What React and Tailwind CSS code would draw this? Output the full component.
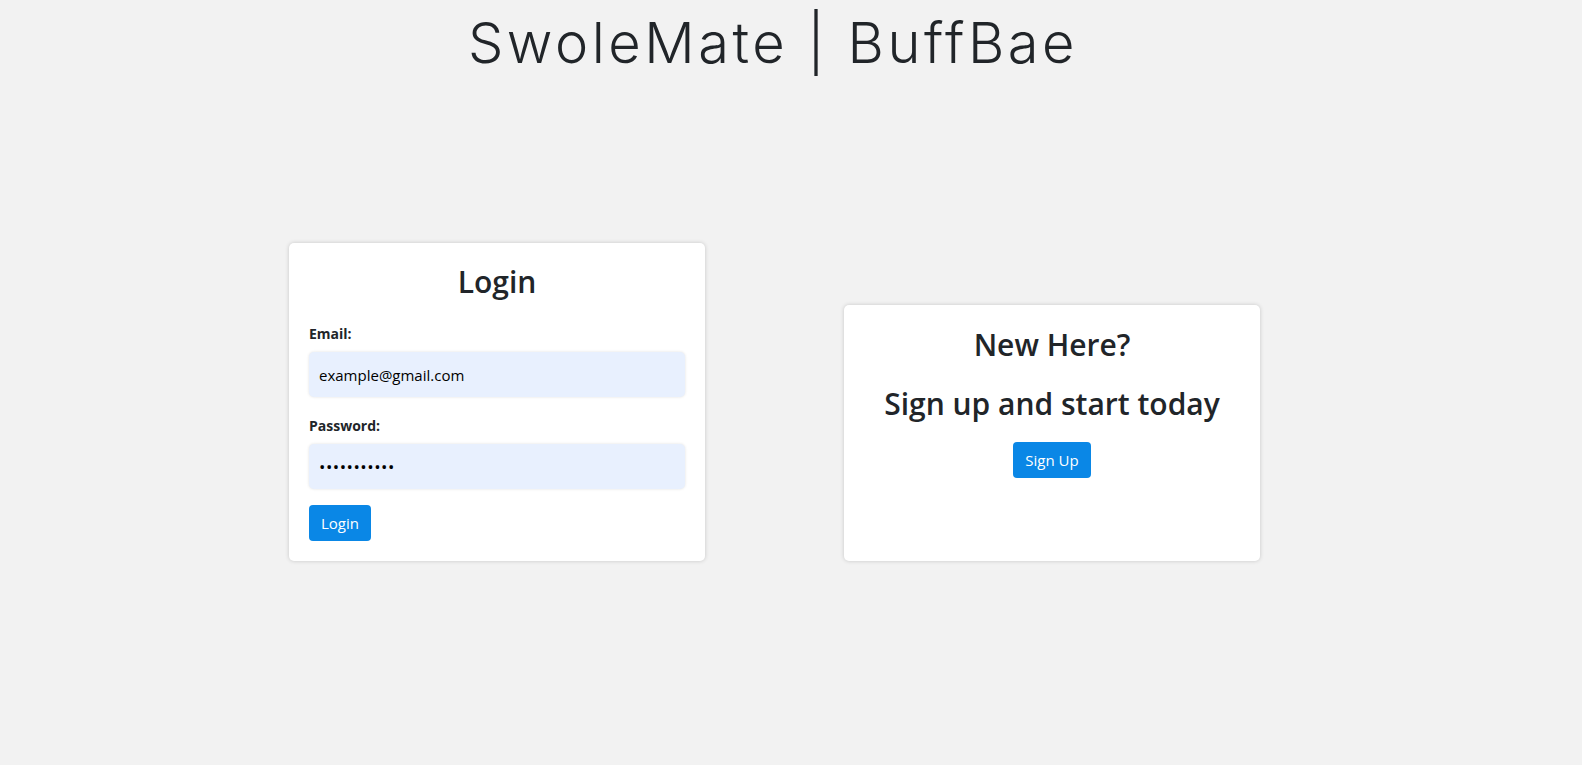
import React, { useState } from "react";

const bodyFont = { fontFamily: '"Open Sans", "Noto Sans", sans-serif' };

const LoginCard = () => {
    const [email, setEmail] = useState("example@gmail.com");
    const [password, setPassword] = useState("password123");

    return (
        <div className="w-[416px] bg-white rounded-[5px] shadow-[0_0_4px_rgba(0,0,0,0.18)] p-5">
            <h2 className="text-center text-[30px] leading-[38px] font-semibold text-[#212529]">Login</h2>
            <label className="block mt-[22px] text-[14px] leading-[21px] font-bold text-[#212529]">Email:</label>
            <input
                type="email"
                value={email}
                onChange={(e) => setEmail(e.target.value)}
                className="mt-2 block w-full h-[45px] px-[10px] rounded-[5px] bg-[#e8f0fe] text-[15px] text-black shadow-[0_0_3px_rgba(0,0,0,0.12)] outline-none"
                style={bodyFont}
            />
            <label className="block mt-[18px] text-[14px] leading-[21px] font-bold text-[#212529]">Password:</label>
            <input
                type="password"
                value={password}
                onChange={(e) => setPassword(e.target.value)}
                className="mt-2 block w-full h-[45px] px-[10px] rounded-[5px] bg-[#e8f0fe] text-[17px] tracking-[0.5px] text-black shadow-[0_0_3px_rgba(0,0,0,0.12)] outline-none"
                style={bodyFont}
            />
            <button
                type="button"
                className="mt-4 h-9 px-3 rounded-[4px] bg-[#0a87e6] text-white text-[15px]"
            >
                Login
            </button>
        </div>
    );
};

const SignupCard = () => {
    return (
        <div className="w-[416px] h-[256px] bg-white rounded-[5px] shadow-[0_0_4px_rgba(0,0,0,0.18)] px-5 pt-[21px] flex flex-col items-center">
            <h2 className="text-[30px] leading-[38px] font-semibold text-[#212529]">New Here?</h2>
            <h2 className="mt-[21px] text-[30px] leading-[38px] font-semibold text-[#212529]">Sign up and start today</h2>
            <button
                type="button"
                className="mt-[19px] h-9 px-3 rounded-[4px] bg-[#0a87e6] text-white text-[15px]"
            >
                Sign Up
            </button>
        </div>
    );
};

export default function App() {
    return (
        <div className="min-h-[765px] bg-[#f2f2f2]" style={bodyFont}>
            <h1
                className="pt-[9px] pr-[36px] text-center text-[56px] leading-[68px] font-light text-[#212529] tracking-[3.5px]"
                style={{ fontFamily: 'Inter, "Open Sans", sans-serif' }}
            >
                SwoleMate | BuffBae
            </h1>
            <div className="mt-[166px] ml-[289px] flex items-end gap-[139px]">
                <LoginCard />
                <SignupCard />
            </div>
        </div>
    );
}
